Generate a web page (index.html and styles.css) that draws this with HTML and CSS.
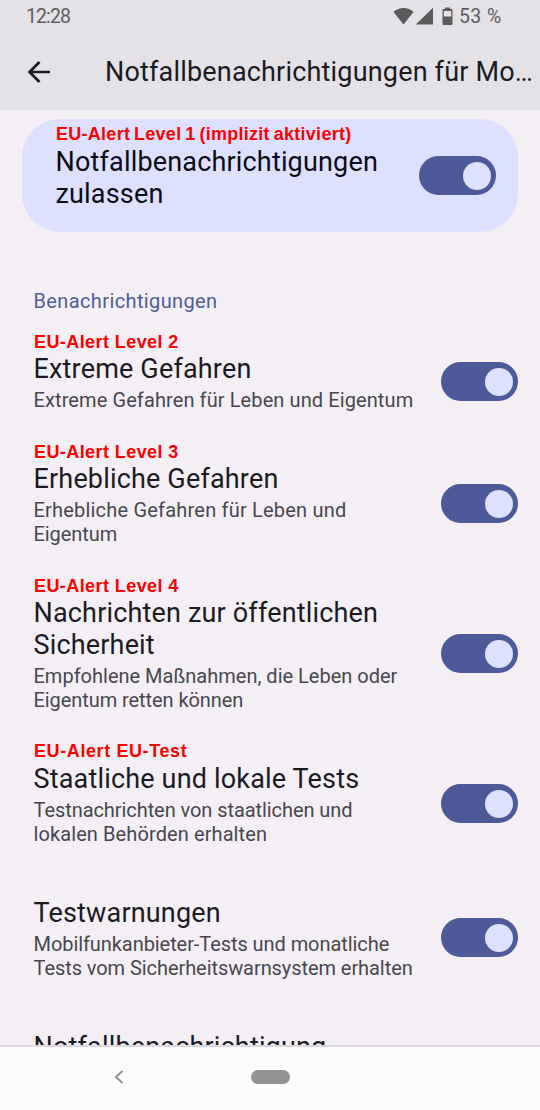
FILE: index.html
```html
<!DOCTYPE html>
<html lang="de">
<head>
<meta charset="utf-8">
<title>Notfallbenachrichtigungen</title>
<link rel="stylesheet" href="styles.css">
</head>
<body>
<div class="screen">
  <header class="header">
    <div class="status">
      <span class="clock">12:28</span>
      <svg class="status-icons" width="62" height="20" viewBox="0 0 62 20">
        <path d="M.5 5C6-.2 15-.2 20.500 5L10.500 17.500z"/>
        <path d="M40 .8V17.500H22.800z"/>
        <path d="M52 .5h5V2h1.500q1 0 1 1v14q0 1-1 1h-8q-1 0-1-1V3q0-1 1-1H52zM50.800 4v5.500h7.400V4z" fill-rule="evenodd"/>
      </svg>
      <span class="percent">53 %</span>
    </div>
    <div class="appbar">
      <svg class="back" width="24" height="24" viewBox="0 0 24 24"><path d="M23 12H3M12.500 2L2.500 12l10 10"/></svg>
      <h1 class="heading">Notfallbenachrichtigungen für Mo…</h1>
    </div>
  </header>
  <main class="content">
    <section class="card">
      <div class="text">
        <span class="note note-main">EU-Alert Level 1 (implizit aktiviert)</span>
        <div class="title title-main">Notfallbenachrichtigungen<br>zulassen</div>
      </div>
      <span class="toggle"></span>
    </section>
    <h2 class="category">Benachrichtigungen</h2>
    <section class="item">
      <div class="text">
        <span class="note">EU-Alert Level 2</span>
        <div class="title">Extreme Gefahren</div>
        <div class="sub loose">Extreme Gefahren für Leben und Eigentum</div>
      </div>
      <span class="toggle"></span>
    </section>
    <section class="item">
      <div class="text">
        <span class="note">EU-Alert Level 3</span>
        <div class="title">Erhebliche Gefahren</div>
        <div class="sub"><span class="looser">Erhebliche Gefahren für Leben und</span><br><span class="tight">Eigentum</span></div>
      </div>
      <span class="toggle"></span>
    </section>
    <section class="item">
      <div class="text">
        <span class="note">EU-Alert Level 4</span>
        <div class="title">Nachrichten zur öffentlichen<br>Sicherheit</div>
        <div class="sub">Empfohlene Maßnahmen, die Leben oder<br><span class="tight">Eigentum retten können</span></div>
      </div>
      <span class="toggle"></span>
    </section>
    <section class="item">
      <div class="text">
        <span class="note note-test">EU-Alert EU-Test</span>
        <div class="title">Staatliche und lokale Tests</div>
        <div class="sub"><span class="tight">Testnachrichten von staatlichen und</span><br><span class="loose">lokalen Behörden erhalten</span></div>
      </div>
      <span class="toggle"></span>
    </section>
    <section class="item">
      <div class="text">
        <div class="title">Testwarnungen</div>
        <div class="sub tight">Mobilfunkanbieter-Tests und monatliche<br>Tests vom Sicherheitswarnsystem erhalten</div>
      </div>
      <span class="toggle"></span>
    </section>
    <section class="item">
      <div class="text">
        <div class="title">Notfallbenachrichtigung</div>
      </div>
    </section>
  </main>
  <nav class="nav">
    <svg class="nav-back" width="10" height="14" viewBox="0 0 10 14"><path d="M8.500 1L2 7l6.500 6"/></svg>
    <span class="home"></span>
  </nav>
</div>
</body>
</html>
```
FILE: styles.css
```css
* { box-sizing: border-box; }
body { margin: 0; font-family: Roboto, sans-serif; }
.screen {
  width: 540px;
  height: 1110px;
  display: flex;
  flex-direction: column;
  overflow: hidden;
  background: #f4eff5;
}
.header { height: 110px; flex: none; background: #e4e2e7; }
.status {
  height: 34px;
  display: flex;
  align-items: center;
  padding: 0 38px 1px 26px;
  font-size: 19px;
  color: #5e5e61;
}
.clock { font-size: 19.500px; letter-spacing: -.9px; }
.status-icons { margin-left: auto; fill: #5b5b5d; }
.percent { width: 43px; margin-left: 4px; font-size: 19.500px; letter-spacing: .4px; white-space: nowrap; }
.appbar { height: 76px; display: flex; align-items: center; padding-left: 27px; }
.back { flex: none; margin-right: 54px; fill: none; stroke: #1b1b1f; stroke-width: 2.700; }
.heading {
  margin: 0;
  font-size: 27px;
  font-weight: 400;
  line-height: 32px;
  letter-spacing: .18px;
  white-space: nowrap;
  color: #1b1b1f;
}
.content { height: 935px; flex: none; overflow: hidden; padding-top: 9px; }
.card {
  height: 113px;
  margin: 0 22px;
  padding: 0 22px 0 33.500px;
  border-radius: 38px;
  display: flex;
  align-items: center;
  justify-content: space-between;
  background: #dde0ff;
}
.text { position: relative; white-space: nowrap; }
.title { font-size: 27px; line-height: 32px; letter-spacing: .17px; color: #1b1b1f; }
.title-main { color: #0c0c14; margin-top: 4px; }
.sub {
  margin-top: 3px;
  font-size: 20px;
  line-height: 24.500px;
  color: #47464f;
}
.tight { letter-spacing: -.07px; }
.loose { letter-spacing: .1px; }
.looser { letter-spacing: .2px; }
.note {
  position: absolute;
  left: .5px;
  top: -22px;
  font: bold 18px/22px "Liberation Sans", Arial, sans-serif;
  letter-spacing: .42px;
  color: #f00;
}
.note-main { top: -19px; letter-spacing: .27px; word-spacing: -1.400px; }
.note-test { top: -23px; letter-spacing: .6px; }
.category {
  margin: 57px 0 14px 33.500px;
  font-size: 20px;
  line-height: 25px;
  letter-spacing: .38px;
  font-weight: 400;
  color: #4f5b9b;
}
.item {
  display: flex;
  align-items: center;
  justify-content: space-between;
  padding: 25px 22px 25px 33.500px;
}
.toggle {
  flex: none;
  width: 77px;
  height: 39px;
  padding-right: 5px;
  border-radius: 20px;
  display: flex;
  align-items: center;
  justify-content: flex-end;
  background: #4e5999;
}
.toggle::before { content: ""; width: 28px; height: 28px; border-radius: 50%; background: #dde0ff; }
.item .toggle { margin-top: -2px; }
.nav {
  height: 65px;
  flex: none;
  display: flex;
  align-items: center;
  padding: 0 0 3px 114px;
  border-top: 2px solid #dad8db;
  background: #fcfcfc;
}
.nav-back { fill: none; stroke: #8d8d8d; stroke-width: 1.800; }
.home { width: 39px; height: 14px; margin-left: 127px; border-radius: 7px; background: #929292; }
```
